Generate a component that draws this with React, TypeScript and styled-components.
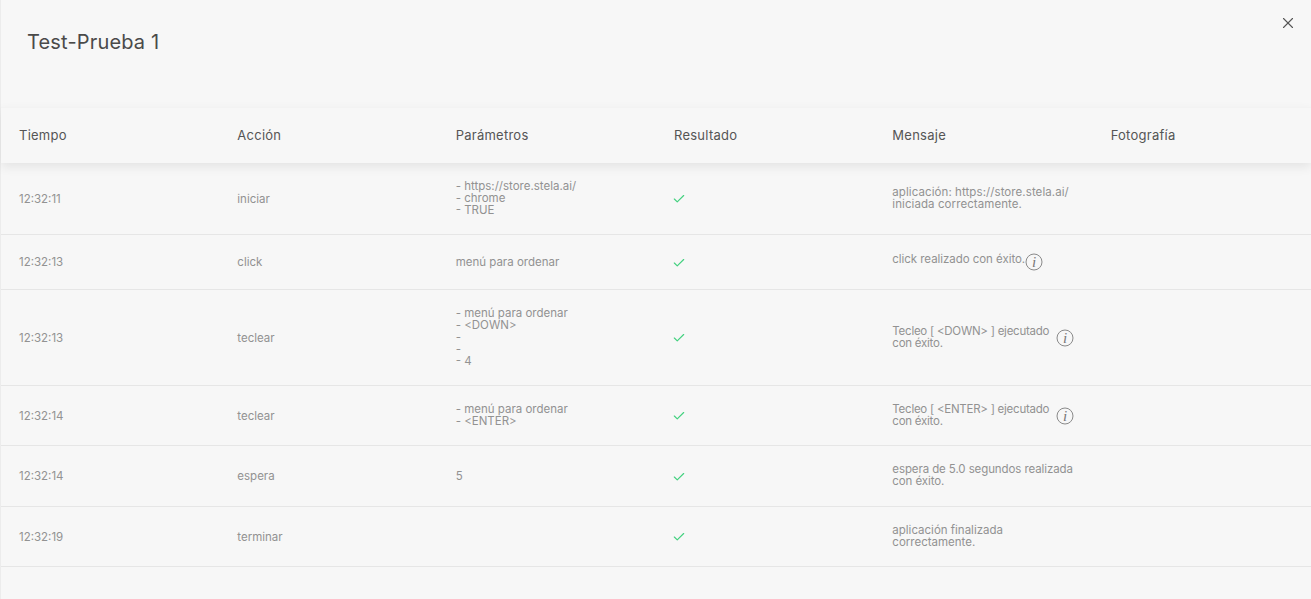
import React from 'react';
import styled, { createGlobalStyle } from 'styled-components';
import { X, Check } from 'lucide-react';

const GlobalStyle = createGlobalStyle`
  html, body {
    margin: 0;
    padding: 0;
    height: 100%;
    background: #f7f7f7;
    overflow: hidden;
  }
  body {
    font-family: 'Inter', 'Liberation Sans', sans-serif;
  }
`;

const Modal = styled.div`
  position: relative;
  height: 599px;
  box-sizing: border-box;
  background: #f7f7f7;
  border-left: 1px solid #ececec;
`;

const CloseButton = styled.button`
  position: absolute;
  top: 14px;
  right: 14px;
  width: 18px;
  height: 18px;
  padding: 0;
  border: 0;
  background: none;
  color: #555;
  display: flex;
`;

const ModalHeader = styled.div`
  height: 107px;
  box-sizing: border-box;
  padding: 29px 26px 0;
`;

const Title = styled.h2`
  margin: 0;
  font-size: 20px;
  line-height: 26px;
  font-weight: 400;
  letter-spacing: 0.17px;
  color: #4a4a4a;
`;

const columns = 'repeat(6, 1fr)';

const HeadRow = styled.div`
  display: grid;
  grid-template-columns: ${columns};
  align-items: center;
  box-sizing: border-box;
  height: 56px;
  padding-bottom: 1px;
  border-top: 1px solid #f3f3f3;
  box-shadow: 0 4px 10px rgba(0, 0, 0, 0.08);
  position: relative;
`;

const HeadCell = styled.div`
  padding-left: 18px;
  font-size: 13px;
  letter-spacing: 0.25px;
  color: #555;
`;

const Row = styled.div<{ $height: number }>`
  display: grid;
  grid-template-columns: ${columns};
  align-items: center;
  box-sizing: border-box;
  height: ${p => p.$height}px;
  border-bottom: 1px solid #e6e6e6;
`;

const Cell = styled.div`
  padding-left: 18px;
  font-size: 11.5px;
  line-height: 12px;
  color: #929292;
  white-space: nowrap;
`;

const Lines = styled(Cell)<{ $multi: boolean }>`
  padding-bottom: ${p => (p.$multi ? '2px' : '0')};
`;

const CheckCell = styled(Cell)`
  color: #43d17f;
  display: flex;
  margin-left: -2px;
  padding-top: 1px;
`;

const MessageCell = styled(Cell)`
  display: flex;
  align-items: center;
`;

const MessageText = styled.div<{ $width?: number; $tracking?: number }>`
  width: ${p => (p.$width ? `${p.$width}px` : 'auto')};
  letter-spacing: ${p => p.$tracking ?? 0}px;
  flex-shrink: 0;
  margin-top: -2px;
`;

const RaisedText = styled(MessageText)`
  margin-top: -7px;
`;

const InfoIcon = styled.svg`
  width: 18px;
  height: 18px;
  flex-shrink: 0;
`;

const Info = () => (
  <InfoIcon viewBox="0 0 18 18" fill="none">
    <circle cx="9" cy="9" r="8" stroke="#8a8a8a" strokeWidth="1" />
    <text x="9" y="14" textAnchor="middle" fontFamily="'Liberation Serif', serif" fontStyle="italic" fontSize="15" fill="#777">i</text>
  </InfoIcon>
);

type RowData = {
  time: string;
  action: string;
  params: string[];
  message: string[];
  height: number;
  textWidth?: number;
  tracking?: number;
  info?: boolean;
  raised?: boolean;
};

const rows: RowData[] = [
  { time: '12:32:11', action: 'iniciar', params: ['- https://store.stela.ai/', '- chrome', '- TRUE'], message: ['aplicación: https://store.stela.ai/', 'iniciada correctamente.'], height: 72, tracking: 0.08 },
  { time: '12:32:13', action: 'click', params: ['menú para ordenar'], message: ['click realizado con éxito.'], height: 55, tracking: -0.05, info: true, raised: true },
  { time: '12:32:13', action: 'teclear', params: ['- menú para ordenar', '- <DOWN>', '-', '-', '- 4'], message: ['Tecleo [ <DOWN> ] ejecutado', 'con éxito.'], height: 96, textWidth: 164, tracking: -0.25, info: true },
  { time: '12:32:14', action: 'teclear', params: ['- menú para ordenar', '- <ENTER>'], message: ['Tecleo [ <ENTER> ] ejecutado', 'con éxito.'], height: 60, textWidth: 164, tracking: -0.25, info: true },
  { time: '12:32:14', action: 'espera', params: ['5'], message: ['espera de 5.0 segundos realizada', 'con éxito.'], height: 61, tracking: -0.1 },
  { time: '12:32:19', action: 'terminar', params: [], message: ['aplicación finalizada', 'correctamente.'], height: 60 },
];

const headers = ['Tiempo', 'Acción', 'Parámetros', 'Resultado', 'Mensaje', 'Fotografía'];

export default function App() {
  return (
    <Modal>
      <GlobalStyle />
      <CloseButton aria-label="Cerrar">
        <X size={18} strokeWidth={1.5} />
      </CloseButton>
      <ModalHeader>
        <Title>Test-Prueba 1</Title>
      </ModalHeader>
      <HeadRow>
        {headers.map(h => <HeadCell key={h}>{h}</HeadCell>)}
      </HeadRow>
      {rows.map((row, idx) => {
        const Text = row.raised ? RaisedText : MessageText;
        return (
          <Row key={`row-${idx}`} $height={row.height}>
            <Cell>{row.time}</Cell>
            <Cell>{row.action}</Cell>
            <Lines $multi={row.params.length > 1}>{row.params.map((p, i) => <div key={i}>{p}</div>)}</Lines>
            <CheckCell><Check size={14} strokeWidth={2} /></CheckCell>
            <MessageCell>
              <Text $width={row.textWidth} $tracking={row.tracking}>
                {row.message.map((m, i) => <div key={i}>{m}</div>)}
              </Text>
              {row.info && <Info />}
            </MessageCell>
            <Cell />
          </Row>
        );
      })}
    </Modal>
  );
}
